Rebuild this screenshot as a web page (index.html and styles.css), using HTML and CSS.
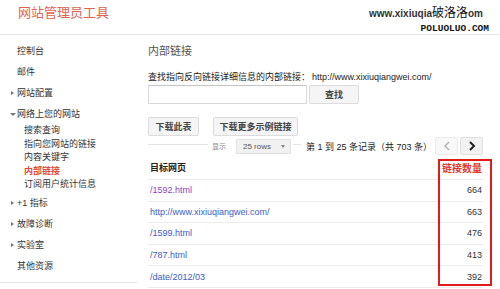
FILE: index.html
```html
<!DOCTYPE html>
<html lang="zh-CN">
<head>
    <meta charset="UTF-8">
    <meta name="viewport" content="width=device-width, initial-scale=1.0">
    <title>网站管理员工具 - 内部链接</title>
    <link rel="stylesheet" href="styles.css">
</head>
<body>
    <header class="topbar">
        <div class="brand">网站管理员工具</div>
        <div class="wm-site">www.xixiuqia<span class="wm-cn">破洛洛</span>om</div>
        <div class="wm-sub">POLUOLUO.COM</div>
    </header>
    <div class="layout">
        <nav class="sidebar">
            <div class="nav-item">控制台</div>
            <div class="nav-item">邮件</div>
            <div class="nav-item"><span class="arrow right"></span>网站配置</div>
            <div class="nav-item group"><span class="arrow down"></span>网络上您的网站</div>
            <div class="sub-list">
                <div class="sub-item">搜索查询</div>
                <div class="sub-item">指向您网站的链接</div>
                <div class="sub-item">内容关键字</div>
                <div class="sub-item active">内部链接</div>
                <div class="sub-item">订阅用户统计信息</div>
            </div>
            <div class="nav-item"><span class="arrow right"></span>+1 指标</div>
            <div class="nav-item"><span class="arrow right"></span>故障诊断</div>
            <div class="nav-item"><span class="arrow right"></span>实验室</div>
            <div class="nav-item">其他资源</div>
        </nav>
        <main class="content">
            <h1 class="page-title">内部链接</h1>
            <div class="search-label">查找指向反向链接详细信息的内部链接：<span class="site-url">http://www.xixiuqiangwei.com/</span></div>
            <div class="search-row">
                <input type="text" class="search-input">
                <button class="btn search-btn">查找</button>
            </div>
            <div class="actions">
                <button class="btn btn-table">下载此表</button>
                <button class="btn btn-more">下载更多示例链接</button>
            </div>
            <div class="toolbar">
                <span class="rule rule-left"></span>
                <span class="show-label">显示</span>
                <div class="rows-select">
                    <span>25 rows</span>
                    <span class="caret"></span>
                </div>
                <span class="rule rule-mid"></span>
                <span class="range-text">第 1 到 25 条记录（共 703 条）</span>
                <div class="pager">
                    <button class="page-btn disabled">
                        <svg width="8" height="10" viewBox="0 0 8 10"><path d="M6 1 L2 5 L6 9" fill="none" stroke="#b5b5b5" stroke-width="1.6"/></svg>
                    </button>
                    <button class="page-btn">
                        <svg width="8" height="10" viewBox="0 0 8 10"><path d="M2 1 L6 5 L2 9" fill="none" stroke="#222" stroke-width="2"/></svg>
                    </button>
                </div>
            </div>
            <div class="table-wrap">
                <table class="links-table">
                    <thead>
                        <tr>
                            <th class="col-page">目标网页</th>
                            <th class="col-count">链接数量</th>
                        </tr>
                    </thead>
                    <tbody>
                        <tr><td><a class="visited" href="#">/1592.html</a></td><td class="num">664</td></tr>
                        <tr><td><a href="#">http://www.xixiuqiangwei.com/</a></td><td class="num">663</td></tr>
                        <tr><td><a href="#">/1599.html</a></td><td class="num">476</td></tr>
                        <tr><td><a href="#">/787.html</a></td><td class="num">413</td></tr>
                        <tr><td><a href="#">/date/2012/03</a></td><td class="num">392</td></tr>
                    </tbody>
                </table>
                <div class="highlight"></div>
            </div>
        </main>
    </div>
</body>
</html>
```

FILE: styles.css
```css
body {
    margin: 0;
    font-family: "Liberation Sans", "Noto Sans CJK SC", sans-serif;
    font-size: 9px;
    color: #333;
    background-color: #fff;
}
.topbar {
    position: relative;
    height: 34px;
    border-bottom: 1px solid #e8e8e8;
}
.brand {
    padding: 5px 0 0 18px;
    font-size: 13px;
    line-height: 16px;
    color: #e0624f;
}
.wm-site {
    position: absolute;
    top: 6px;
    right: 17px;
    font-size: 10px;
    line-height: 14px;
    font-weight: bold;
    color: #333;
}
.wm-cn {
    font-size: 12px;
    font-weight: normal;
    color: #111;
}
.wm-sub {
    position: absolute;
    top: 24px;
    right: 11px;
    font-family: "Liberation Mono", monospace;
    font-size: 9.5px;
    line-height: 10px;
    font-weight: bold;
    color: #111;
}
.layout {
    display: flex;
}
.sidebar {
    align-self: flex-start;
    width: 137px;
    padding: 6px 0 5.5px;
    border-bottom: 1px solid #e8e8e8;
}
.nav-item {
    padding-left: 17px;
    height: 21px;
    line-height: 21px;
    color: #333;
}
.nav-item.group {
    height: 20px;
    line-height: 20px;
}
.arrow {
    display: inline-block;
    width: 0;
    height: 0;
    vertical-align: middle;
}
.arrow.right {
    margin: -1px 3px 0 -6px;
    border-left: 3px solid #777;
    border-top: 2.5px solid transparent;
    border-bottom: 2.5px solid transparent;
}
.arrow.down {
    margin: -1px 1px 0 -7px;
    border-top: 3px solid #777;
    border-left: 3px solid transparent;
    border-right: 3px solid transparent;
}
.sub-list {
    padding-bottom: 1px;
}
.sub-item {
    padding-left: 24px;
    height: 13.5px;
    line-height: 13.5px;
    color: #333;
}
.sub-item.active {
    color: #dd4b39;
    font-weight: bold;
}
.content {
    flex: 1;
    padding-left: 11px;
}
.page-title {
    margin: 8px 0 0;
    font-size: 11px;
    line-height: 16px;
    font-weight: normal;
    color: #555;
}
.search-label {
    margin-top: 12px;
    line-height: 12px;
    color: #222;
}
.site-url {
    margin-left: 2px;
}
.search-row {
    display: flex;
    margin-top: 2px;
}
.search-input {
    box-sizing: border-box;
    width: 159px;
    height: 19px;
    margin: 0;
    padding: 0 4px;
    border: 1px solid #d9d9d9;
    border-top-color: #c4c4c4;
}
.btn {
    box-sizing: border-box;
    height: 19px;
    margin: 0;
    padding: 0;
    border: 1px solid #dcdcdc;
    border-radius: 2px;
    background-color: #f5f5f5;
    font-family: "Liberation Sans", "Noto Sans CJK SC", sans-serif;
    font-size: 9px;
    font-weight: bold;
    color: #444;
}
.search-btn {
    width: 50px;
    margin-left: 2px;
}
.actions {
    display: flex;
    gap: 14px;
    margin-top: 13px;
}
.btn-table {
    width: 51px;
}
.btn-more {
    width: 85px;
}
.toolbar {
    display: flex;
    align-items: center;
    width: 335px;
    height: 18px;
    margin-top: 1px;
}
.rule {
    height: 0;
    border-top: 1px solid #e3e3e3;
    margin-top: -3px;
}
.rule-left {
    width: 60px;
}
.rule-mid {
    width: 8px;
    margin-left: 2px;
}
.show-label {
    margin-left: 4px;
    font-size: 7px;
    color: #888;
}
.rows-select {
    box-sizing: border-box;
    display: flex;
    align-items: center;
    justify-content: space-between;
    width: 55px;
    height: 15px;
    margin-left: 10px;
    padding: 0 5px 0 6px;
    border: 1px solid #e2e2e2;
    background-color: #f1f1f1;
    font-size: 8px;
    color: #555;
}
.caret {
    width: 0;
    height: 0;
    border-top: 3px solid #888;
    border-left: 2.5px solid transparent;
    border-right: 2.5px solid transparent;
}
.range-text {
    margin-left: 5px;
    color: #222;
}
.pager {
    display: flex;
    gap: 2px;
    margin-left: auto;
}
.page-btn {
    box-sizing: border-box;
    display: flex;
    align-items: center;
    justify-content: center;
    width: 23px;
    height: 18px;
    padding: 0;
    border: 1px solid #e0e0e0;
    border-radius: 2px;
    background-color: #f2f2f2;
}
.page-btn.disabled {
    background-color: #f8f8f8;
    border-color: #ececec;
}
.table-wrap {
    position: relative;
    width: 335px;
}
.links-table {
    width: 100%;
    border-collapse: separate;
    border-spacing: 0;
}
.links-table th {
    height: 24px;
    padding: 0;
    border-bottom: 1px solid #ececec;
    font-weight: bold;
}
.col-page {
    padding-left: 2px !important;
    text-align: left;
    color: #222;
}
.col-count {
    padding-right: 1px !important;
    text-align: right;
    font-size: 10px;
    color: #e0392b;
}
.links-table td {
    height: 20.6px;
    padding: 0 0 0 2px;
    border-bottom: 1px solid #ececec;
}
.links-table a {
    color: #3b5dc9;
    text-decoration: none;
}
.links-table a.visited {
    color: #8a3fc0;
}
.links-table td.num {
    padding: 0 1px 0 0;
    text-align: right;
    color: #333;
}
.highlight {
    position: absolute;
    top: 4px;
    left: 290px;
    box-sizing: border-box;
    width: 54px;
    height: 127px;
    border: 2px solid #e01b1b;
}
```
